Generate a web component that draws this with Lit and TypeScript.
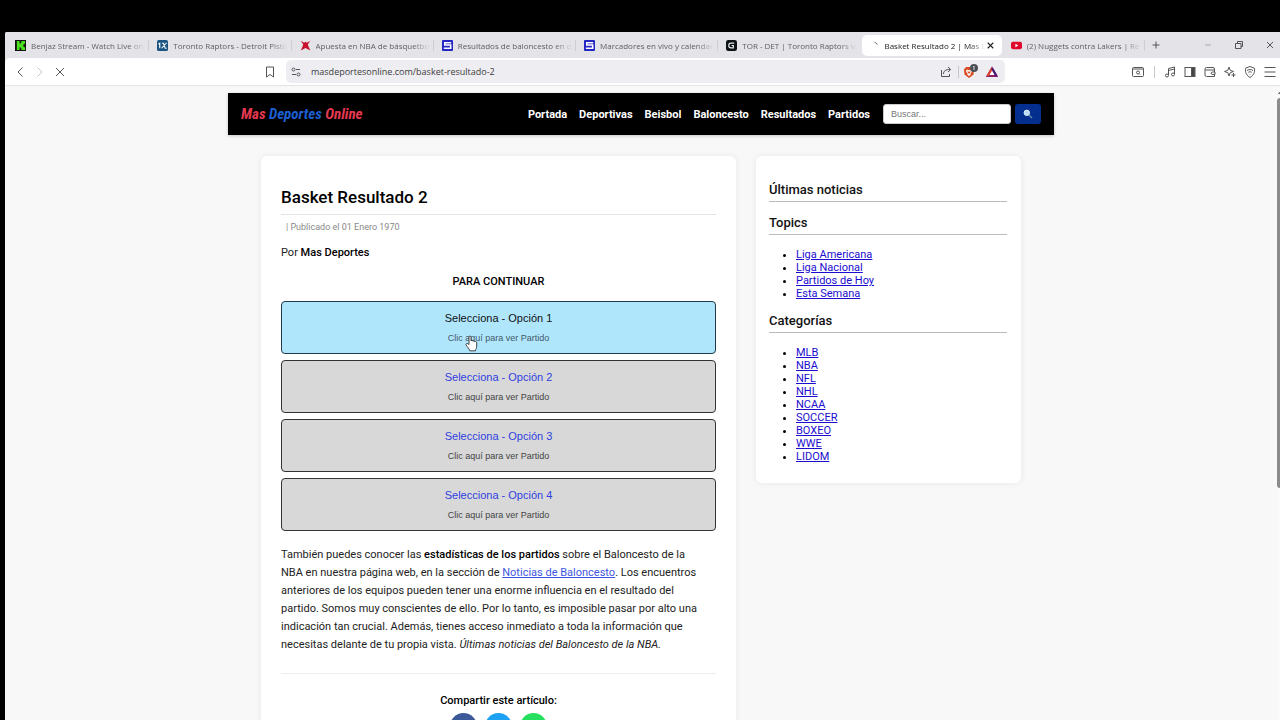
import { LitElement, html, css, svg } from "lit";
import { customElement, property } from "lit/decorators.js";
import { classMap } from "lit/directives/class-map.js";

interface Tab {
  title: string;
  icon: string;
  active?: boolean;
}

const TABS: Tab[] = [
  { title: "Benjaz Stream - Watch Live on", icon: "kick" },
  { title: "Toronto Raptors - Detroit Pisto", icon: "onex" },
  { title: "Apuesta en NBA de básquetbo", icon: "star" },
  { title: "Resultados de baloncesto en d", icon: "sofa" },
  { title: "Marcadores en vivo y calendar", icon: "sofa" },
  { title: "TOR - DET | Toronto Raptors vs", icon: "gee" },
  { title: "Basket Resultado 2 | Mas D", icon: "spin", active: true },
  { title: "(2) Nuggets contra Lakers | Re", icon: "tube" },
];

const favicons: Record<string, unknown> = {
  kick: svg`<rect width="12" height="12" fill="#111"/><path d="M2 1h3v3h1V3h1V1h4v3h-1v1H9v2h1v1h1v3H7V9H6V8H5v3H2z" fill="#4be01d"/>`,
  onex: svg`<rect width="12" height="12" rx="2" fill="#1a5582"/><path d="M1.500 4.500l1.500-1V9M5 9l5.500-6M5.500 3.500h1.500L9 9h1.500" stroke="#fff" stroke-width="1.200" fill="none"/>`,
  star: svg`<path d="M.8.800L4.500 3 6 1.800 7.500 3 11.200.800 8.500 5l.8 2 2 4.500L6 8.800.8 11.500l2-4.500.7-2z" fill="#c8102e"/>`,
  sofa: svg`<rect width="12" height="12" rx="1" fill="#2426c4"/><path d="M10 3H3v2.500h6.500V9H2" stroke="#fff" stroke-width="1.700" fill="none"/>`,
  gee: svg`<rect width="12" height="12" rx="2.500" fill="#0c1115"/><path d="M9 3.500H5.500a2.500 2.500 0 0 0 0 5H8V6H6" stroke="#e8e8e8" stroke-width="1.300" fill="none"/>`,
  spin: svg`<path d="M6 2.500a4 4 0 0 1 3 2.500" stroke="#666" stroke-width="1" fill="none"/>`,
  tube: svg`<rect y="2" width="12" height="8" rx="2" fill="#e0082d"/><path d="M4.800 4.200v3.600L8 6z" fill="#fff"/>`,
};

const glyphs: Record<string, unknown> = {
  back: svg`<path d="M8.500 1.500L4 6l4.500 4.500"/>`,
  forward: svg`<path d="M3.500 1.500L8 6l-4.500 4.500"/>`,
  stop: svg`<path d="M2 2l8 8M10 2l-8 8"/>`,
  bookmark: svg`<path d="M2.500 1h7v10L6 8.500 2.500 11z"/>`,
  tune: svg`<circle cx="3.500" cy="3.500" r="1.500"/><path d="M6 3.500h4M2 8.500h4"/><circle cx="8.500" cy="8.500" r="1.500"/>`,
  share: svg`<path d="M1.500 4v6.500h8V8M3.500 8c0-3 2-4.500 6.500-4.500M8 1l2.700 2.500L8 6"/>`,
  reader: svg`<rect x=".5" y="1.500" width="11" height="9" rx="1"/><path d="M.5 3h11M8 8.500l-1-1"/><circle cx="6" cy="6.500" r="1.500"/>`,
  music: svg`<path d="M4.500 9V2.500l6-1.500v7M4.500 4.500l6-1.500"/><circle cx="3" cy="9.500" r="1.500"/><circle cx="9" cy="8.500" r="1.500"/>`,
  panel: svg`<rect x="1" y="1.500" width="10" height="9"/><path d="M7.500 2h3v8h-3z" fill="#444"/>`,
  wallet: svg`<path d="M10.500 4V3A1.500 1.500 0 0 0 9 1.500H2.500A1.500 1.500 0 0 0 1 3v6a1.500 1.500 0 0 0 1.500 1.500h8V8.500M1.500 4h9v2M11 6H8.500a1.200 1.200 0 0 0 0 2.500H11z"/>`,
  sparkle: svg`<path d="M5 1l1.200 3.300L9.500 5.500 6.200 6.700 5 10 3.800 6.700.5 5.500l3.300-1.200zM9.500 7v4M7.500 9h4"/>`,
  shield: svg`<path d="M6 .5l4.500 1.700C11 6.500 9.500 9.500 6 11.500 2.500 9.500 1 6.500 1.500 2.200zM3 4.500c2-1.300 4-1.300 6 0M4.300 6.300c1-.7 2.400-.7 3.400 0M6 8v.5"/>`,
  menu: svg`<path d="M.5 1.500h11M.5 6h11M.5 10.500h11"/>`,
  plus: svg`<path d="M6 2.500v7M2.500 6h7"/>`,
  minimize: svg`<path d="M3 6h6" stroke="#aaa"/>`,
  restore: svg`<path d="M2.500 4.500h5.500v5H2.500zM4.500 4.500v-2h5v5H8"/>`,
  close: svg`<path d="M3 3l6 6M9 3L3 9"/>`,
};

const glyph = (name: string) => html`<svg class="glyph" viewBox="0 0 12 12" aria-hidden="true">${glyphs[name]}</svg>`;

const tool = (name: string, label: string, extra = "") =>
  html`<button class="tool ${extra}" aria-label=${label}>${glyph(name)}</button>`;

const controlStyles = css`
  * { box-sizing: border-box; }
  button { border: 0; background: none; padding: 0; margin: 0; font: inherit; color: inherit; }
  .glyph { display: block; width: 12px; height: 12px; fill: none; stroke: currentColor; stroke-width: 1; }
  .tool { flex: none; width: 20px; height: 20px; display: grid; place-items: center; color: #555; }
`;

@customElement("browser-tabs")
class BrowserTabs extends LitElement {
  static styles = [controlStyles, css`
    :host { display: flex; height: 26px; padding-left: 3px; background: #e4e3e7; font: 8px/20px "Open Sans", "Noto Sans", sans-serif; color: #606064; }
    .tabs { flex: 1; min-width: 0; display: flex; }
    .tab { flex: 1 1 0; min-width: 0; position: relative; display: flex; align-items: center; margin: 3px 2px 2px 0; padding: 0 3px 0 7px; height: 21px; border-radius: 5px; }
    .tab:not(.active):not(.before)::after { content: ""; position: absolute; right: -1px; top: 5px; height: 11px; width: 1px; background: #cfced3; }
    .active { background: #fff; color: #222; }
    .favicon { flex: none; width: 11px; height: 11px; margin-right: 5px; }
    .title { flex: 1; min-width: 0; overflow: hidden; white-space: nowrap; -webkit-mask-image: linear-gradient(90deg, #000 85%, transparent); mask-image: linear-gradient(90deg, #000 85%, transparent); }
    .shut { flex: none; margin-right: 3px; }
    .shut .glyph { width: 11px; height: 11px; stroke-width: 1.2; }
    .window { flex: none; display: flex; align-items: center; width: 134px; }
    .gap { flex: 1; }
    .window .tool + .tool { margin-left: 11px; }
  `];

  render() {
    return html`
      <div class="tabs" role="tablist">
        ${TABS.map((tab, i) => html`
          <div class=${classMap({ tab: true, active: !!tab.active, before: !!TABS[i + 1]?.active })} role="tab">
            <svg class="favicon" viewBox="0 0 12 12" aria-hidden="true">${favicons[tab.icon]}</svg>
            <span class="title">${tab.title}</span>
            ${tab.active ? html`<button class="shut" aria-label="Cerrar pestaña">${glyph("close")}</button>` : ""}
          </div>`)}
      </div>
      <div class="window">
        ${tool("plus", "Nueva pestaña")}
        <span class="gap"></span>
        ${tool("minimize", "Minimizar")}${tool("restore", "Restaurar")}${tool("close", "Cerrar")}
      </div>`;
  }
}

@customElement("browser-toolbar")
class BrowserToolbar extends LitElement {
  static styles = [controlStyles, css`
    :host { display: grid; grid-template-columns: 281fr 719fr 275fr; align-items: center; height: 28px; background: #fff; border-bottom: 1px solid #e4e4e6; border-top-left-radius: 5px; }
    .side { display: flex; align-items: center; min-width: 0; }
    .left { padding: 0 6px 0 5px; }
    .left .tool:last-child { margin-left: auto; }
    .right { justify-content: flex-end; }
    .dim { color: #c4c4c8; }
    .address { min-width: 0; height: 23px; display: flex; align-items: center; padding: 0 2px 0 0; background: #eeedf1; border-radius: 5px; }
    .url { flex: 1; min-width: 0; margin-left: 5px; padding: 0; border: 0; background: none; outline: 0; font: 9px/20px "Open Sans", "Noto Sans", sans-serif; color: #3c3c40; }
    .rule { flex: none; width: 1px; height: 12px; margin-left: 2px; background: #c8c8cc; }
    .right .rule { margin: 0 5px 0 6px; }
    .logo { flex: none; width: 22px; height: 20px; display: grid; place-items: center; }
    .logo svg { display: block; }
  `];

  render() {
    return html`
      <div class="side left">
        ${tool("back", "Atrás")}${tool("forward", "Adelante", "dim")}${tool("stop", "Detener")}${tool("bookmark", "Marcador")}
      </div>
      <div class="address">
        ${tool("tune", "Información del sitio")}
        <input class="url" aria-label="Dirección" .value=${"masdeportesonline.com/basket-resultado-2"} />
        ${tool("share", "Compartir")}
        <span class="rule"></span>
        <button class="logo" aria-label="Escudos">
          <svg width="17" height="16" viewBox="0 0 17 16">
            <path d="M4 3h6l2 2.500-.5 5L7 14l-4.500-3.500-.5-5z" fill="#d9481f"/>
            <path d="M4.500 5.500l2.500.7 2.500-.7.5 2.500-1.500 1 .3 1.500L7 12l-1.800-1.500.3-1.500L4 8z" fill="#fff"/>
            <path d="M5 7.200l2 .5 2-.5L7 10z" fill="#d9481f"/>
            <circle cx="12" cy="4" r="4" fill="#4b4f55"/>
            <path d="M11 3l1-1v4" stroke="#cfd2d6" fill="none"/>
          </svg>
        </button>
        <button class="logo" aria-label="Recompensas">
          <svg width="12" height="12" viewBox="0 0 12 12">
            <path d="M6 2.200L1.500 10h9z" fill="#fff" stroke="#8a1f6a" stroke-width="2"/>
            <path d="M6 2.200L1.500 10" stroke="#e0452a" stroke-width="2"/>
            <path d="M6 2.200L10.500 10" stroke="#4a1a78" stroke-width="2"/>
          </svg>
        </button>
      </div>
      <div class="side right">
        ${tool("reader", "Buscar en página")}
        <span class="rule"></span>
        ${tool("music", "Medios")}${tool("panel", "Panel lateral")}${tool("wallet", "Cartera")}${tool("sparkle", "Asistente")}${tool("shield", "VPN")}${tool("menu", "Menú")}
      </div>`;
  }
}

@customElement("site-header")
class SiteHeader extends LitElement {
  static styles = [controlStyles, css`
    :host { display: flex; align-items: center; width: 100%; max-width: 826px; min-height: 42px; margin: 0 auto; padding: 0 13px; background: #000; box-shadow: 0 1px 3px rgba(0, 0, 0, 0.2); font-family: Roboto, sans-serif; }
    .brand { margin-right: auto; font: italic 700 15px/22px "Liberation Sans Narrow", "Roboto Condensed", Roboto, sans-serif; color: #e63950; text-decoration: none; white-space: nowrap; }
    .blue { color: #1d5fd0; }
    .nav { display: flex; gap: 12px; margin-right: 13px; padding-top: 2px; }
    .link { color: #fff; font-size: 11px; line-height: 18px; font-weight: 700; text-decoration: none; }
    .search { display: flex; gap: 4px; }
    .field { width: 128px; height: 20px; padding: 0 7px; border: 1px solid #ccc; border-radius: 3px; background: #fff; font: 9px "Liberation Sans", sans-serif; color: #333; }
    .field::placeholder { color: #777; }
    .go { width: 26px; height: 20px; display: grid; place-items: center; border-radius: 3px; background: #052f8f; }
  `];

  render() {
    return html`
      <a class="brand" href="#">Mas <span class="blue">Deportes</span> Online</a>
      <nav class="nav">
        ${["Portada", "Deportivas", "Beisbol", "Baloncesto", "Resultados", "Partidos"].map((t) => html`<a class="link" href="#">${t}</a>`)}
      </nav>
      <form class="search">
        <input class="field" type="text" placeholder="Buscar..." aria-label="Buscar" />
        <button class="go" type="button" aria-label="Buscar">
          <svg width="10" height="10" viewBox="0 0 10 10"><path d="M5.500 5.500L9 9" stroke="#5e86a8" stroke-width="1.500"/><circle cx="3.800" cy="3.800" r="2.700" fill="#b5dcf7" stroke="#e4f0f8"/></svg>
        </button>
      </form>`;
  }
}

@customElement("option-button")
class OptionButton extends LitElement {
  @property({ type: Number }) number = 1;
  @property({ type: Boolean }) hovered = false;

  static styles = [controlStyles, css`
    :host { display: block; position: relative; }
    .option { width: 100%; display: flex; flex-direction: column; align-items: center; gap: 5px; padding: 8px 8px 7px; border: 1px solid #333; border-radius: 4px; background: #d8d8d8; font-family: "Liberation Sans", Arial, sans-serif; }
    .name { font-size: 11px; line-height: 16px; color: #2f3fe0; }
    .hint { font-size: 9px; line-height: 15px; color: #444; }
    .hovered { background: #b0e6fb; border-color: #1f3a4a; }
    .hovered .name { color: #111; }
    .hovered .hint { color: #42586a; }
    .pointer { position: absolute; left: 184px; top: 34px; }
  `];

  render() {
    return html`
      <button class=${classMap({ option: true, hovered: this.hovered })}>
        <span class="name">Selecciona - Opción ${this.number}</span>
        <span class="hint">Clic aquí para ver Partido</span>
      </button>
      ${this.hovered ? html`
        <svg class="pointer" width="13" height="17" viewBox="0 0 13 17" aria-hidden="true">
          <path d="M4 9.500V2.200C4 .6 6 .6 6 2.200V6c.3-.8 1.800-.7 2 .3.400-.7 1.700-.5 1.900.4.500-.5 1.800-.2 1.800 1V11c0 2.500-1 3-1.300 4.800H4.800C4.500 14 1.800 11.500 1 9.800.6 8.700 2 8 2.800 8.700z" fill="#fff" stroke="#333" stroke-width=".9"/>
        </svg>` : ""}`;
  }
}

@customElement("news-article")
class NewsArticle extends LitElement {
  static styles = [controlStyles, css`
    :host { display: block; padding: 29px 20px 20px; background: #fff; border-radius: 6px; box-shadow: 0 0 6px rgba(0, 0, 0, 0.07); font: 11px/18px Roboto, sans-serif; color: #222; }
    .heading { margin: 0; padding-bottom: 5px; border-bottom: 1px solid #e4e4e4; font-size: 17px; line-height: 24px; font-weight: 500; color: #000; }
    .meta { margin: 6px 0 0; padding-left: 5px; font-size: 9px; line-height: 12px; color: #888; }
    .byline { margin: 11px 0 0; }
    .strong { font-weight: 500; color: #000; }
    .prompt { margin: 11px 0 10px; text-align: center; font-weight: 500; color: #000; }
    .options { display: grid; gap: 6px; }
    .text { margin: 15px 0 0; padding-right: 15px; }
    .inline { color: #3f55e0; }
    .share { margin-top: 19px; padding-top: 18px; border-top: 1px solid #eee; text-align: center; }
    .label { margin: 0 0 3px; font-weight: 500; color: #000; }
    .icons { display: flex; justify-content: center; gap: 8px; }
    .round { display: grid; place-items: center; width: 27px; height: 27px; border-radius: 50%; }
    .fb { background: #3b5998; }
    .tw { background: #1da1f2; }
    .wa { background: #25e05e; }
  `];

  render() {
    return html`
      <h1 class="heading">Basket Resultado 2</h1>
      <p class="meta">| Publicado el 01 Enero 1970</p>
      <p class="byline">Por <strong class="strong">Mas Deportes</strong></p>
      <p class="prompt">PARA CONTINUAR</p>
      <div class="options">
        ${[1, 2, 3, 4].map((n) => html`<option-button .number=${n} ?hovered=${n === 1}></option-button>`)}
      </div>
      <p class="text">También puedes conocer las <strong class="strong">estadísticas de los partidos</strong> sobre el Baloncesto de la NBA en nuestra página web, en la sección de <a class="inline" href="#">Noticias de Baloncesto</a>. Los encuentros anteriores de los equipos pueden tener una enorme influencia en el resultado del partido. Somos muy conscientes de ello. Por lo tanto, es imposible pasar por alto una indicación tan crucial. Además, tienes acceso inmediato a toda la información que necesitas delante de tu propia vista. <em>Últimas noticias del Baloncesto de la NBA.</em></p>
      <div class="share">
        <p class="label">Compartir este artículo:</p>
        <div class="icons">
          <a class="round fb" href="#" aria-label="Facebook"><svg width="12" height="12" viewBox="0 0 12 12"><path d="M8.500 1H7.300C6 1 5.500 2 5.500 3v8M3.500 5.500h4.500" stroke="#fff" stroke-width="1.800" fill="none"/></svg></a>
          <a class="round tw" href="#" aria-label="Twitter"><svg width="12" height="12" viewBox="0 0 12 12"><path d="M0 9.500c4 2.500 10 .5 10-6L11.500 2 10 2.200C8.500.5 6 1.500 6 4 3.500 4 2 3 .8 1.800 0 4 1 5.500 2 6L.8 5.800C1 7.500 2 8 3 8.300z" fill="#fff"/></svg></a>
          <a class="round wa" href="#" aria-label="WhatsApp"><svg width="12" height="12" viewBox="0 0 12 12"><path d="M1 11l.8-2.700A4.700 4.700 0 1 1 3.700 10z" fill="none" stroke="#fff"/><path d="M4 4c0 2 2 4 4 4" stroke="#fff" stroke-width="1.500" fill="none"/></svg></a>
        </div>
      </div>`;
  }
}

@customElement("site-sidebar")
class SiteSidebar extends LitElement {
  static styles = [controlStyles, css`
    :host { display: flex; flex-direction: column; gap: 13px; padding: 26px 14px 20px 13px; background: #fff; border-radius: 6px; box-shadow: 0 0 6px rgba(0, 0, 0, 0.07); font: 11px/13px Roboto, sans-serif; }
    .title { margin: 0; padding-bottom: 3px; border-bottom: 1px solid #bbb; font-size: 13px; line-height: 16px; font-weight: 500; color: #111; }
    .list { margin: 0; padding-left: 27px; color: #000; }
    .link { color: #1a0dcf; }
  `];

  list(items: string[]) {
    return html`<ul class="list">${items.map((t) => html`<li><a class="link" href="#">${t}</a></li>`)}</ul>`;
  }

  render() {
    return html`
      <h2 class="title">Últimas noticias</h2>
      <h2 class="title">Topics</h2>
      ${this.list(["Liga Americana", "Liga Nacional", "Partidos de Hoy", "Esta Semana"])}
      <h2 class="title">Categorías</h2>
      ${this.list(["MLB", "NBA", "NFL", "NHL", "NCAA", "SOCCER", "BOXEO", "WWE", "LIDOM"])}`;
  }
}

@customElement("app-root")
class AppRoot extends LitElement {
  static styles = css`
    * { box-sizing: border-box; }
    :host { display: flex; flex-direction: column; height: 100vh; padding: 32px 0 0 5px; background: #000; overflow: hidden; box-sizing: border-box; }
    .chrome { flex: none; background: #e4e3e7; border-top-left-radius: 2px; overflow: hidden; }
    .view { flex: 1; min-height: 0; display: flex; background: #f8f8f8; }
    .page { flex: 1; min-width: 0; overflow: hidden; padding-top: 7px; }
    .columns { display: grid; grid-template-columns: 475fr 265fr; gap: 20px; align-items: start; width: 100%; max-width: 760px; margin: 21px auto 0; }
    .scroll { flex: none; width: 3px; background: #fafafa; padding-top: 5px; overflow: hidden; }
    .arrow { display: block; width: 3px; height: 3px; margin-bottom: 4px; background: linear-gradient(135deg, transparent 50%, #777 50%); }
    .thumb { height: 62%; border-radius: 3px 0 0 3px; background: #8b8b8b; }
  `;

  render() {
    return html`
      <div class="chrome">
        <browser-tabs></browser-tabs>
        <browser-toolbar></browser-toolbar>
      </div>
      <div class="view">
        <div class="page">
          <site-header></site-header>
          <main class="columns">
            <news-article></news-article>
            <site-sidebar></site-sidebar>
          </main>
        </div>
        <div class="scroll"><span class="arrow"></span><div class="thumb"></div></div>
      </div>`;
  }
}
